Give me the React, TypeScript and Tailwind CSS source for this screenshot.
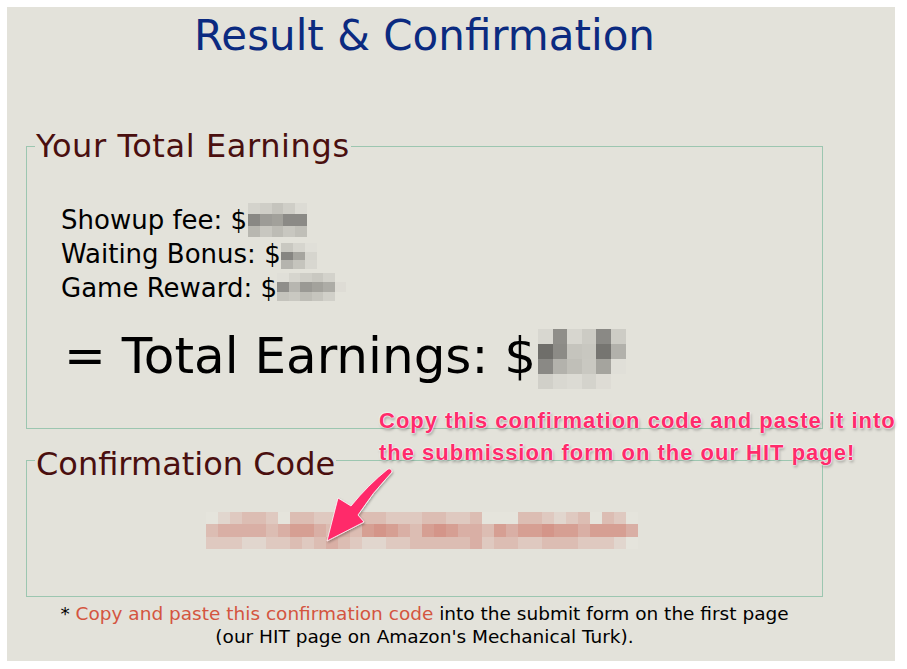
import React from "react";

type Grid = string[][];

function Pix({ rows, cw, ch, className }: { rows: Grid; cw: number; ch: number; className?: string }) {
  const w = rows[0].length * cw;
  const h = rows.length * ch;
  return (
    <svg width={w} height={h} className={className} shapeRendering="crispEdges">
      {rows.map((r, i) =>
        r.map((c, j) => <rect key={i + "-" + j} x={j * cw} y={i * ch} width={cw + 0.5} height={ch + 0.5} fill={c} />)
      )}
    </svg>
  );
}

const showup: Grid = [
  ["#d4d3cc", "#cfcec7", "#c5c4bd", "#cfcec7", "#dcdbd4"],
  ["#898884", "#9d9c97", "#a2a19b", "#8b8a86", "#8b8a86"],
  ["#b8b7b0", "#c8c7c0", "#bdbcb5", "#c8c7c0", "#c0bfb8"],
];
const waiting: Grid = [
  ["#c9c8c1", "#d6d5ce", "#e0dfd8"],
  ["#868581", "#a6a59f", "#d6d5ce"],
  ["#b5b4ae", "#c5c4bd", "#d8d7d0"],
];
const game: Grid = [
  ["#e0dfd8", "#d6d5ce", "#cfcec7", "#c9c8c1", "#d3d2cb", "#e3e2da"],
  ["#8f8e8a", "#b7b6b0", "#9a9994", "#a3a29c", "#adaca6", "#dedcd5"],
  ["#c4c3bc", "#c9c8c1", "#bebdb6", "#c6c5be", "#d1d0c9", "#e3e2da"],
];
const total: Grid = [
  ["#d8d7d0", "#8f8e89", "#d7d6cf", "#cccbc4", "#8a8985", "#cdccc5"],
  ["#6f6e6a", "#8c8b86", "#c5c4bd", "#c8c7c0", "#767571", "#b2b1ab"],
  ["#8a8985", "#b3b2ac", "#c0bfb8", "#c9c8c1", "#a5a49e", "#e0dfd8"],
  ["#d1d0c9", "#d9d8d1", "#dcdbd4", "#d4d3cc", "#dedcd5", "#e3e2da"],
];

const pal: Record<string, string> = {
  "0": "#e5e4dc",
  "1": "#e1d6ce",
  "2": "#dfc9c0",
  "3": "#dcbdb3",
  "4": "#d9afa5",
  "5": "#d69f93",
  "6": "#d49589",
};
const codeRows = [
  "012332033223333222332230003321230320",
  "344443455434356543565443545565545554",
  "222112232343211223333342332233322210",
].map((s) => s.padEnd(36, "1").slice(0, 36).split("").map((c) => pal[c]));

export default function App() {
  return (
    <div className="relative min-h-screen bg-white pl-[7px] pt-[7px] font-['DejaVu_Sans',sans-serif]">
      <div className="h-[654px] w-[888px] bg-[#e3e2da] pt-[5px]">
        <div className="ml-[19px] w-[797px]">
          <h1 className="text-center text-[42px] leading-[48px] font-normal text-[#0b2a80]">Result &amp; Confirmation</h1>

          <fieldset className="mt-[68px] border border-[#9cc6b0] pt-[38px] pb-[44px]">
            <legend className="ml-[8px] px-[1px] text-[32px] leading-[37px] tracking-[0.6px] text-[#4a0f0f]">Your Total Earnings</legend>
            <div className="pl-[34px] text-[26px] leading-[34px] text-black">
              <div className="flex items-start">
                <span>Showup fee: $</span>
                <Pix rows={showup} cw={11.8} ch={11.33} className="ml-[1px]" />
              </div>
              <div className="flex items-start">
                <span>Waiting Bonus: $</span>
                <Pix rows={waiting} cw={12} ch={8.7} className="mt-[6px]" />
              </div>
              <div className="flex items-start">
                <span>Game Reward: $</span>
                <Pix rows={game} cw={11.5} ch={9.33} className="mt-[2px]" />
              </div>
            </div>
            <div className="ml-[37px] mt-[23px] flex h-[56px] items-start text-[50px] leading-[56px] text-black">
              <span>= Total Earnings: $</span>
              <Pix rows={total} cw={14.6} ch={15} className="mt-[1px] ml-[2px]" />
            </div>
          </fieldset>

          <fieldset className="mt-[9px] border border-[#9cc6b0] pt-[29px] pb-[47px]">
            <legend className="ml-[8px] px-[1px] pt-[8px] text-[32px] leading-[37px] text-[#4a0f0f]">Confirmation Code</legend>
            <div className="flex justify-center pr-[5px]">
              <Pix rows={codeRows} cw={12} ch={12.3} />
            </div>
          </fieldset>

          <p className="mt-[5px] text-center font-['DejaVu_Sans',sans-serif] text-[18.5px] leading-[23px] text-black">
            * <span className="text-[#d4553f]">Copy and paste this confirmation code</span> into the submit form on the first page
            <br />
            (our HIT page on Amazon&apos;s Mechanical Turk).
          </p>
        </div>
      </div>

      <div className="absolute left-[379px] top-[405px] font-['Liberation_Sans',Arial,sans-serif] text-[22px] font-bold leading-[32px] tracking-[1px] whitespace-nowrap text-[#ff2b6b] [text-shadow:0_0_2px_#fff,0_0_2px_#fff,0_0_1px_#fff,1px_2px_3px_rgba(0,0,0,0.35)]">
        <div>Copy this confirmation code and paste it into</div>
        <div>the submission form on the our HIT page!</div>
      </div>

      <svg className="absolute left-[320px] top-[460px] pointer-events-none overflow-visible" width="80" height="90" viewBox="0 0 80 90">
        <defs>
          <filter id="ds" x="-30%" y="-30%" width="160%" height="160%">
            <feDropShadow dx="1" dy="1.5" stdDeviation="1.2" floodColor="#000" floodOpacity="0.3" />
          </filter>
        </defs>
        <path
          d="M 68 9 Q 71.5 8 72 12 Q 52 33 38 55 L 44 62 L 7 81 L 18 38 L 31 46 Q 48 25 68 9 Z"
          fill="#ff2b6b"
          stroke="#ffffff"
          strokeWidth="0.8"
          strokeLinejoin="round"
          filter="url(#ds)"
        />
      </svg>
    </div>
  );
}
